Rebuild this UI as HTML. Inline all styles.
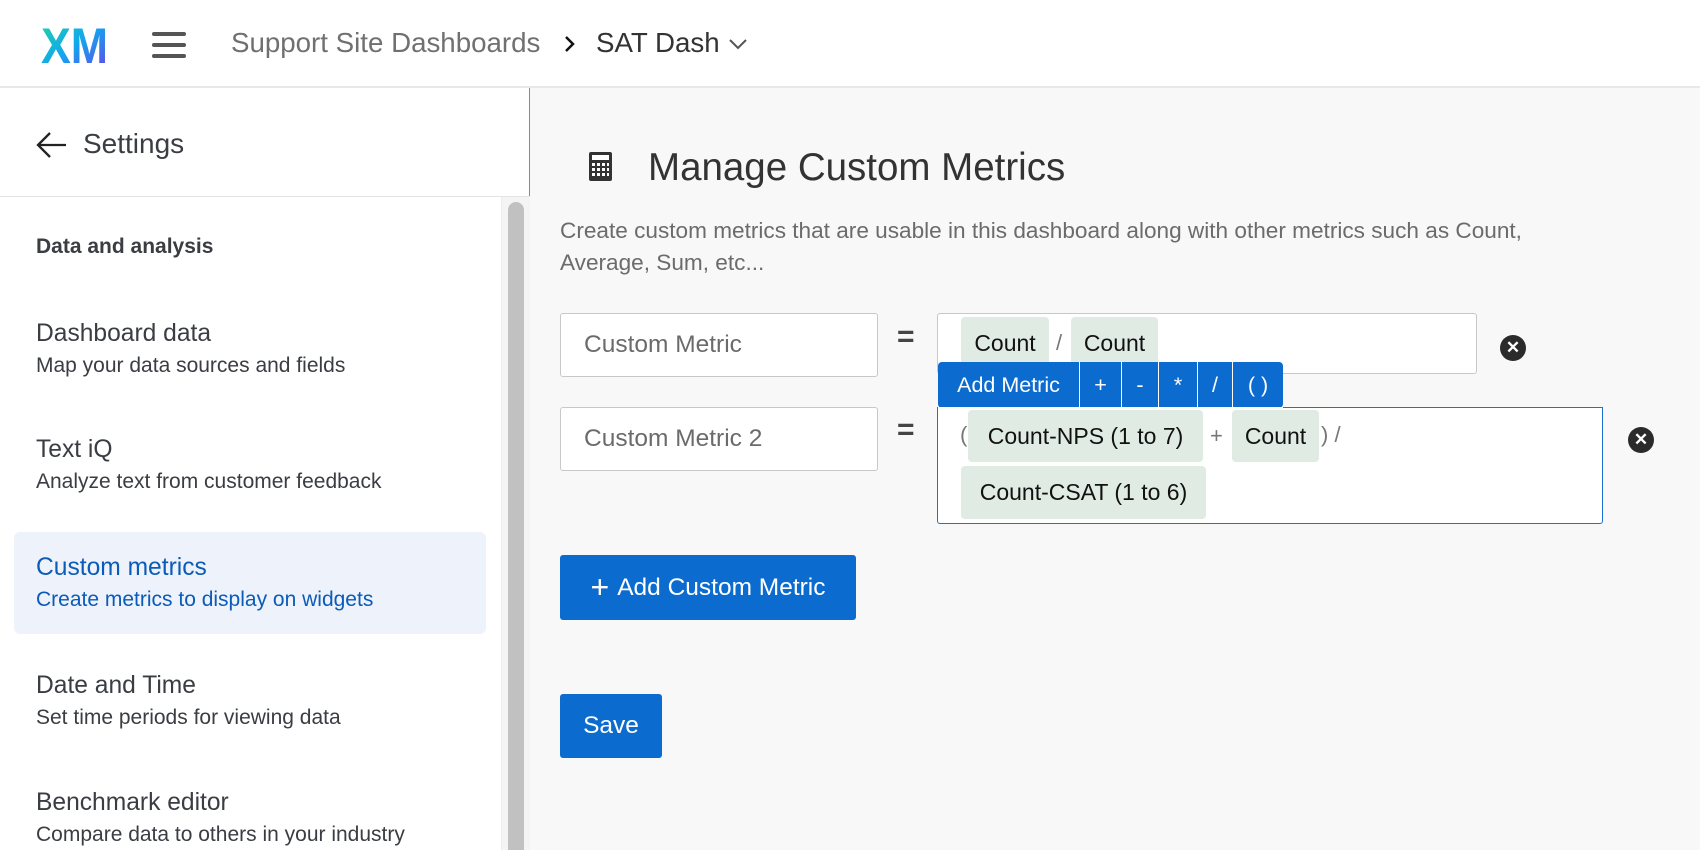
<!DOCTYPE html>
<html><head><meta charset="utf-8"><style>
*{box-sizing:border-box;margin:0;padding:0}
body{width:1700px;height:850px;overflow:hidden;background:#f8f8f8;font-family:"Liberation Sans",sans-serif;position:relative;color:#333}
.a{position:absolute;white-space:nowrap}
.hdr{left:0;top:0;width:1700px;height:88px;background:#fff;border-bottom:2px solid #e8e8e8}
.side{left:0;top:88px;width:530px;height:762px;background:#fff;border-right:1px solid #8a8a8a}
.t{font-size:24.6px;color:#3a3d42;left:36px}
.s{font-size:21px;color:#3a3d42;left:36px}
.inp{background:#fff;border:1px solid #c8c8c8;border-radius:3px;width:318px;height:64px;left:560px;font-size:24.5px;color:#6b6b6b;padding-left:23px;line-height:62px}
.chip{background:#e0ebe4;border-radius:4px;font-size:23px;color:#111;text-align:center}
.eq{font-size:30px;font-weight:bold;color:#444;left:897px}
.x{width:26px;height:26px;border-radius:50%;background:#2b2b2b;color:#fff;font-size:17px;font-weight:bold;text-align:center;line-height:26px}
.btn{background:#0c6bcf;color:#fff;border-radius:3px;font-size:24.5px;text-align:center}
.tb{top:362px;height:46px;background:#0c6bcf;color:#fff;font-size:21.5px;line-height:46px;text-align:center;border-left:1px solid #fff}
</style></head><body>
<div class="a hdr"></div>
<svg class="a" style="left:40px;top:24px" width="70" height="42"><defs><linearGradient id="g" x1="0" y1="0" x2="1" y2="1"><stop offset="0" stop-color="#1fd6a0"/><stop offset="0.5" stop-color="#12a6f0"/><stop offset="1" stop-color="#6b3de8"/></linearGradient></defs><text x="1" y="39" font-family="Liberation Sans" font-weight="bold" font-size="50" fill="url(#g)" textLength="67" lengthAdjust="spacingAndGlyphs">XM</text></svg>
<div class="a" style="left:152px;top:32px;width:34px;height:4px;background:#555;border-radius:2px"></div>
<div class="a" style="left:152px;top:43px;width:34px;height:4px;background:#555;border-radius:2px"></div>
<div class="a" style="left:152px;top:54px;width:34px;height:4px;background:#555;border-radius:2px"></div>
<div class="a" style="left:231px;top:27px;font-size:27.7px;color:#707070">Support Site Dashboards</div>
<svg class="a" style="left:563px;top:34px" width="14" height="20"><path d="M3 3l7 7-7 7" stroke="#111" stroke-width="2.5" fill="none"/></svg>
<div class="a" style="left:596px;top:27px;font-size:27.7px;color:#333">SAT Dash</div>
<svg class="a" style="left:727px;top:37px" width="22" height="14"><path d="M3 3l8 8 8-8" stroke="#555" stroke-width="2" fill="none"/></svg>

<div class="a side"></div>
<svg class="a" style="left:34px;top:130px" width="34" height="30"><path d="M32 15H4M16 3L4 15l12 12" stroke="#222" stroke-width="2.3" fill="none"/></svg>
<div class="a" style="left:83px;top:128px;font-size:28px;color:#3a3d42">Settings</div>
<div class="a" style="left:0;top:196px;width:530px;height:1px;background:#e4e4e4"></div>
<div class="a" style="left:501px;top:197px;width:29px;height:653px;background:#f4f4f4;border-left:1px solid #ececec"></div>
<div class="a" style="left:508px;top:202px;width:16px;height:648px;background:#c1c1c1;border-radius:8px 8px 0 0"></div>
<div class="a" style="left:36px;top:235px;font-size:21px;font-weight:bold;color:#3a3d42">Data and analysis</div>
<div class="a t" style="top:320px">Dashboard data</div>
<div class="a s" style="top:354px">Map your data sources and fields</div>
<div class="a t" style="top:436px">Text iQ</div>
<div class="a s" style="top:470px">Analyze text from customer feedback</div>
<div class="a" style="left:14px;top:532px;width:472px;height:102px;background:#edf2fb;border-radius:6px"></div>
<div class="a t" style="top:554px;color:#0b5bb8">Custom metrics</div>
<div class="a s" style="top:588px;color:#0b5bb8">Create metrics to display on widgets</div>
<div class="a t" style="top:672px">Date and Time</div>
<div class="a s" style="top:706px">Set time periods for viewing data</div>
<div class="a t" style="top:789px">Benchmark editor</div>
<div class="a s" style="top:823px">Compare data to others in your industry</div>

<svg class="a" style="left:589px;top:152px" width="24" height="30"><rect x="0" y="0" width="23" height="29" rx="2" fill="#333"/><rect x="3" y="3" width="17" height="5" fill="#fff"/><g fill="#fff"><rect x="3" y="11" width="3" height="3"/><rect x="8" y="11" width="3" height="3"/><rect x="13" y="11" width="3" height="3"/><rect x="18" y="11" width="2" height="3"/><rect x="3" y="16" width="3" height="3"/><rect x="8" y="16" width="3" height="3"/><rect x="13" y="16" width="3" height="3"/><rect x="18" y="16" width="2" height="3"/><rect x="3" y="21" width="3" height="3"/><rect x="8" y="21" width="3" height="3"/><rect x="13" y="21" width="3" height="3"/><rect x="18" y="21" width="2" height="3"/></g></svg>
<div class="a" style="left:648px;top:146px;font-size:38.5px;color:#333;font-weight:300">Manage Custom Metrics</div>
<div class="a" style="left:560px;top:215px;font-size:22.6px;color:#6b6b6b;line-height:32px;white-space:normal;width:1100px">Create custom metrics that are usable in this dashboard along with other metrics such as Count,<br>Average, Sum, etc...</div>

<div class="a inp" style="top:313px">Custom Metric</div>
<div class="a eq" style="top:320px">=</div>
<div class="a" style="left:937px;top:313px;width:540px;height:61px;background:#fff;border:1px solid #c8c8c8;border-radius:3px"></div>
<div class="a chip" style="left:961px;top:317px;width:88px;height:52px;line-height:52px">Count</div>
<div class="a" style="left:1056px;top:330px;font-size:22px;color:#777">/</div>
<div class="a chip" style="left:1071px;top:317px;width:87px;height:52px;line-height:52px">Count</div>
<div class="a x" style="left:1500px;top:335px">✕</div>

<div class="a tb" style="left:938px;width:141px;border-left:none;border-radius:4px 0 0 4px">Add Metric</div>
<div class="a tb" style="left:1079px;width:42px">+</div>
<div class="a tb" style="left:1121px;width:37px">-</div>
<div class="a tb" style="left:1158px;width:39px">*</div>
<div class="a tb" style="left:1197px;width:35px">/</div>
<div class="a tb" style="left:1232px;width:51px;border-radius:0 4px 4px 0">( )</div>

<div class="a inp" style="top:407px">Custom Metric 2</div>
<div class="a eq" style="top:413px">=</div>
<div class="a" style="left:937px;top:407px;width:666px;height:117px;background:#fff;border:1px solid #1a73d0;border-top:none;border-radius:0 0 3px 3px"></div>
<div class="a" style="left:1283px;top:407px;width:320px;height:1px;background:#1a73d0"></div>
<div class="a" style="left:960px;top:422px;font-size:22px;color:#777">(</div>
<div class="a chip" style="left:968px;top:410px;width:235px;height:52px;line-height:52px">Count-NPS (1 to 7)</div>
<div class="a" style="left:1210px;top:423px;font-size:22px;color:#777">+</div>
<div class="a chip" style="left:1232px;top:410px;width:87px;height:52px;line-height:52px">Count</div>
<div class="a" style="left:1321px;top:422px;font-size:22px;color:#777">) /</div>
<div class="a chip" style="left:961px;top:466px;width:245px;height:53px;line-height:53px">Count-CSAT (1 to 6)</div>
<div class="a x" style="left:1628px;top:427px">✕</div>

<div class="a btn" style="left:560px;top:555px;width:296px;height:65px;line-height:65px"><span style="font-size:32px;vertical-align:-3px;margin-right:8px">+</span>Add Custom Metric</div>
<div class="a btn" style="left:560px;top:694px;width:102px;height:64px;line-height:64px">Save</div>
</body></html>
